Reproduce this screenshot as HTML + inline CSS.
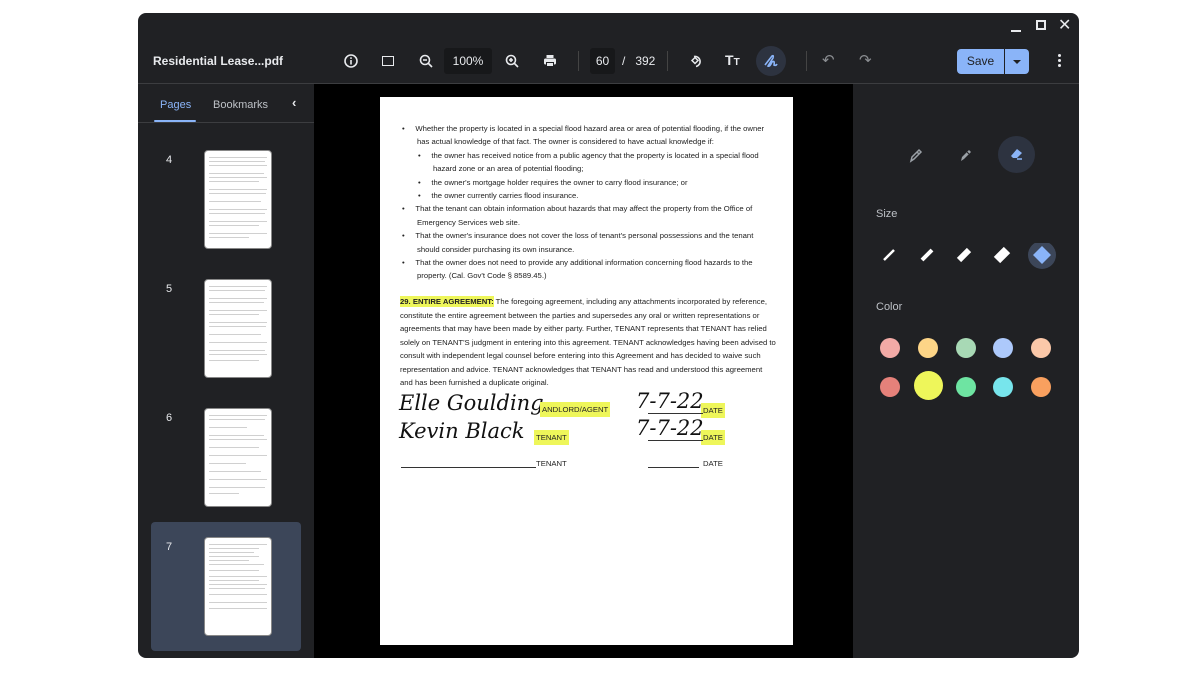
<!DOCTYPE html>
<html><head><meta charset="utf-8"><style>
*{margin:0;padding:0;box-sizing:border-box}
body{width:1200px;height:675px;background:#fff;font-family:"Liberation Sans",Arial,sans-serif;position:relative;overflow:hidden}
.win{position:absolute;left:138px;top:13px;width:941px;height:645px;background:#202124;border-radius:8px;overflow:hidden}
.a{position:absolute}
.doc{position:absolute;left:242px;top:84px;width:413px;height:548px;background:#fff;color:#222;font-size:7.7px}
.doc .l{position:absolute;white-space:nowrap}
.hl{background:#eef65a}
.thumb{position:absolute;left:66px;width:68px;height:99px;background:#fff;border-radius:4px;border:1px solid #888}
.thumb i{position:absolute;left:4px;height:1px;background:#d0d0d0}
.num{position:absolute;left:28px;color:#e8eaed;font-size:11px}
.dot{position:absolute;width:20px;height:20px;border-radius:50%}
.sig{font-family:"DejaVu Serif",serif;font-style:italic;font-size:21px;color:#111}
</style></head><body>
<div class="win">
 <div class="a" style="left:873px;top:17px;width:10px;height:2px;background:#e8eaed"></div>
 <div class="a" style="left:898px;top:7px;width:10px;height:10px;border:2px solid #e8eaed"></div>
 <div class="a" style="left:920px;top:2px;color:#e8eaed;font-size:16px">✕</div>
 <div class="a" style="left:15px;top:41px;color:#e8eaed;font-size:12px;font-weight:bold">Residential Lease...pdf</div>
 <svg class="a" style="left:205px;top:40px" width="16" height="16" viewBox="0 0 16 16"><circle cx="8" cy="8" r="6" fill="none" stroke="#e8eaed" stroke-width="1.6"/><rect x="7.2" y="7" width="1.6" height="4.5" fill="#e8eaed"/><rect x="7.2" y="4.3" width="1.6" height="1.6" fill="#e8eaed"/></svg>
 <div class="a" style="left:244px;top:43px;width:12px;height:10px;border:1.6px solid #e8eaed"></div>
 <svg class="a" style="left:280px;top:40px" width="16" height="16" viewBox="0 0 16 16"><circle cx="7" cy="7" r="4.5" fill="none" stroke="#e8eaed" stroke-width="1.6"/><path d="M10.5 10.5L14 14M5 7h4" stroke="#e8eaed" stroke-width="1.6"/></svg>
 <div class="a" style="left:306px;top:35px;width:48px;height:26px;background:#17181a;border-radius:3px;color:#e8eaed;font-size:12px;text-align:center;line-height:26px">100%</div>
 <svg class="a" style="left:366px;top:40px" width="16" height="16" viewBox="0 0 16 16"><circle cx="7" cy="7" r="4.5" fill="none" stroke="#e8eaed" stroke-width="1.6"/><path d="M10.5 10.5L14 14M5 7h4M7 5v4" stroke="#e8eaed" stroke-width="1.6"/></svg>
 <svg class="a" style="left:404px;top:40px" width="16" height="16" viewBox="0 0 16 16"><rect x="4.5" y="2" width="7" height="3" fill="#e8eaed"/><rect x="2" y="5.5" width="12" height="6" rx="1.5" fill="#e8eaed"/><rect x="4.5" y="9.5" width="7" height="4" fill="#e8eaed" stroke="#202124" stroke-width="1"/></svg>
 <div class="a" style="left:440px;top:38px;width:1px;height:20px;background:#444"></div>
 <div class="a" style="left:452px;top:35px;width:25px;height:26px;background:#17181a;border-radius:3px;color:#e8eaed;font-size:12px;text-align:center;line-height:26px">60</div>
 <div class="a" style="left:484px;top:41px;color:#e8eaed;font-size:12px">/&nbsp;&nbsp;&nbsp;392</div>
 <div class="a" style="left:529px;top:38px;width:1px;height:20px;background:#444"></div>
 <svg class="a" style="left:550px;top:40px" width="16" height="16" viewBox="0 0 16 16"><path d="M6 3.5A5 5 0 1 1 8 13.5" fill="none" stroke="#e8eaed" stroke-width="1.6"/><path d="M4 7.5l3 -3 3 3-3 3z" fill="none" stroke="#e8eaed" stroke-width="1.5"/></svg>
 <div class="a" style="left:587px;top:39px;color:#e8eaed;font-size:14px;font-weight:bold">T<span style="font-size:10px">T</span></div>
 <div class="a" style="left:618px;top:33px;width:30px;height:30px;border-radius:50%;background:#2d3340"></div>
 <svg class="a" style="left:625px;top:40px" width="16" height="16" viewBox="0 0 16 16"><path d="M2 12L9 3Q11 2 10 5L5 13Q7 14 9 9Q12 7 11 12Q13 13 14 11" fill="none" stroke="#8ab4f8" stroke-width="1.6"/></svg>
 <div class="a" style="left:668px;top:38px;width:1px;height:20px;background:#444"></div>
 <div class="a" style="left:684px;top:38px;color:#8a8d91;font-size:15px">↶</div>
 <div class="a" style="left:721px;top:38px;color:#8a8d91;font-size:15px">↷</div>
 <div class="a" style="left:819px;top:36px;width:47px;height:25px;background:#8ab4f8;border-radius:4px 0 0 4px;color:#202124;font-size:12px;text-align:center;line-height:25px">Save</div>
 <div class="a" style="left:867px;top:36px;width:24px;height:25px;background:#8ab4f8;border-radius:0 4px 4px 0"></div>
 <div class="a" style="left:875px;top:47px;border:4px solid transparent;border-top:4px solid #202124;border-bottom:0"></div>
 <div class="a" style="left:920px;top:41px;width:3px;height:3px;background:#e8eaed;border-radius:50%;box-shadow:0 5px 0 #e8eaed,0 10px 0 #e8eaed"></div>
 <div class="a" style="left:0;top:70px;width:941px;height:1px;background:#3c3d40"></div>
 <div class="a" style="left:22px;top:86px;color:#8ab4f8;font-size:11px">Pages</div>
 <div class="a" style="left:16px;top:107px;width:42px;height:2px;background:#8ab4f8;border-radius:2px"></div>
 <div class="a" style="left:75px;top:86px;color:#bdc1c6;font-size:11px">Bookmarks</div>
 <div class="a" style="left:154px;top:82px;color:#e8eaed;font-size:13px;font-weight:bold">‹</div>
 <div class="a" style="left:0;top:109px;width:176px;height:1px;background:#3c3d40"></div>
 <div class="a" style="left:13px;top:509px;width:150px;height:129px;background:#3c4659;border-radius:4px"></div>
 <div class="num" style="top:141px">4</div><div class="num" style="top:270px">5</div><div class="num" style="top:399px">6</div><div class="num" style="top:528px">7</div>
 <div class="thumb" style="top:137px"><i style="top:6px;width:58px"></i><i style="top:10px;width:56px"></i><i style="top:14px;width:58px"></i><i style="top:22px;width:55px"></i><i style="top:26px;width:58px"></i><i style="top:30px;width:50px"></i><i style="top:38px;width:58px"></i><i style="top:42px;width:57px"></i><i style="top:50px;width:52px"></i><i style="top:58px;width:58px"></i><i style="top:62px;width:56px"></i><i style="top:70px;width:58px"></i><i style="top:74px;width:50px"></i><i style="top:82px;width:58px"></i><i style="top:86px;width:40px"></i></div>
 <div class="thumb" style="top:266px"><i style="top:6px;width:58px"></i><i style="top:10px;width:56px"></i><i style="top:18px;width:58px"></i><i style="top:22px;width:55px"></i><i style="top:30px;width:58px"></i><i style="top:34px;width:50px"></i><i style="top:42px;width:58px"></i><i style="top:46px;width:57px"></i><i style="top:54px;width:52px"></i><i style="top:62px;width:58px"></i><i style="top:70px;width:56px"></i><i style="top:74px;width:58px"></i><i style="top:80px;width:50px"></i></div>
 <div class="thumb" style="top:395px"><i style="top:6px;width:58px"></i><i style="top:10px;width:56px"></i><i style="top:18px;width:38px"></i><i style="top:26px;width:55px"></i><i style="top:30px;width:58px"></i><i style="top:38px;width:50px"></i><i style="top:46px;width:58px"></i><i style="top:54px;width:37px"></i><i style="top:62px;width:52px"></i><i style="top:70px;width:58px"></i><i style="top:78px;width:56px"></i><i style="top:84px;width:30px"></i></div>
 <div class="thumb" style="top:524px"><i style="top:6px;width:58px"></i><i style="top:10px;width:50px"></i><i style="top:14px;width:45px"></i><i style="top:18px;width:50px"></i><i style="top:22px;width:40px"></i><i style="top:26px;width:55px"></i><i style="top:32px;width:50px"></i><i style="top:38px;width:58px"></i><i style="top:42px;width:50px"></i><i style="top:46px;width:58px"></i><i style="top:50px;width:56px"></i><i style="top:56px;width:58px"></i><i style="top:64px;width:58px"></i><i style="top:70px;width:58px"></i></div>
 <div class="a" style="left:176px;top:71px;width:539px;height:574px;background:#000"></div>
 <div class="doc">
  <div class="l" style="left:22px;top:27px">•&nbsp;&nbsp;&nbsp;&nbsp;&nbsp;Whether the property is located in a special flood hazard area or area of potential flooding, if the owner</div>
  <div class="l" style="left:37px;top:40px">has actual knowledge of that fact. The owner is considered to have actual knowledge if:</div>
  <div class="l" style="left:38px;top:54px">•&nbsp;&nbsp;&nbsp;&nbsp;&nbsp;the owner has received notice from a public agency that the property is located in a special flood</div>
  <div class="l" style="left:53px;top:67px">hazard zone or an area of potential flooding;</div>
  <div class="l" style="left:38px;top:81px">•&nbsp;&nbsp;&nbsp;&nbsp;&nbsp;the owner's mortgage holder requires the owner to carry flood insurance; or</div>
  <div class="l" style="left:38px;top:94px">•&nbsp;&nbsp;&nbsp;&nbsp;&nbsp;the owner currently carries flood insurance.</div>
  <div class="l" style="left:22px;top:107px">•&nbsp;&nbsp;&nbsp;&nbsp;&nbsp;That the tenant can obtain information about hazards that may affect the property from the Office of</div>
  <div class="l" style="left:37px;top:121px">Emergency Services web site.</div>
  <div class="l" style="left:22px;top:134px">•&nbsp;&nbsp;&nbsp;&nbsp;&nbsp;That the owner's insurance does not cover the loss of tenant's personal possessions and the tenant</div>
  <div class="l" style="left:37px;top:148px">should consider purchasing its own insurance.</div>
  <div class="l" style="left:22px;top:161px">•&nbsp;&nbsp;&nbsp;&nbsp;&nbsp;That the owner does not need to provide any additional information concerning flood hazards to the</div>
  <div class="l" style="left:37px;top:174px">property. (Cal. Gov't Code § 8589.45.)</div>
  <div class="l" style="left:20px;top:200px"><b class="hl" style="padding:1px 0">29. ENTIRE AGREEMENT:</b> The foregoing agreement, including any attachments incorporated by reference,</div>
  <div class="l" style="left:20px;top:214px">constitute the entire agreement between the parties and supersedes any oral or written representations or</div>
  <div class="l" style="left:20px;top:227px">agreements that may have been made by either party. Further, TENANT represents that TENANT has relied</div>
  <div class="l" style="left:20px;top:241px">solely on TENANT'S judgment in entering into this agreement. TENANT acknowledges having been advised to</div>
  <div class="l" style="left:20px;top:254px">consult with independent legal counsel before entering into this Agreement and has decided to waive such</div>
  <div class="l" style="left:20px;top:268px">representation and advice. TENANT acknowledges that TENANT has read and understood this agreement</div>
  <div class="l" style="left:20px;top:281px">and has been furnished a duplicate original.</div>
  <div class="l sig" style="left:19px;top:294px">Elle Goulding</div>
  <div class="l hl" style="left:160px;top:305px;padding:3px 2px">ANDLORD/AGENT</div>
  <div class="l sig" style="left:256px;top:292px">7-7-22</div>
  <div class="l hl" style="left:321px;top:306px;padding:3px 2px">DATE</div>
  <div class="l sig" style="left:19px;top:322px">Kevin Black</div>
  <div class="l hl" style="left:154px;top:333px;padding:3px 2px">TENANT</div>
  <div class="l sig" style="left:256px;top:319px">7-7-22</div>
  <div class="l hl" style="left:321px;top:333px;padding:3px 2px">DATE</div>
  <div class="l" style="left:156px;top:362px">TENANT</div>
  <div class="a" style="left:21px;top:370px;width:135px;height:1px;background:#333"></div>
  <div class="a" style="left:268px;top:370px;width:51px;height:1px;background:#333"></div>
  <div class="l" style="left:323px;top:362px">DATE</div>
  <div class="a" style="left:268px;top:316px;width:55px;height:1px;background:#333"></div>
  <div class="a" style="left:268px;top:343px;width:55px;height:1px;background:#333"></div>
 </div>
 <svg class="a" style="left:770px;top:134px" width="16" height="16" viewBox="0 0 16 16"><path d="M3 14L4 10L11 3L13 5L6 12Z M9 5L11 7" fill="none" stroke="#9aa0a6" stroke-width="1.5"/></svg>
 <svg class="a" style="left:820px;top:134px" width="16" height="16" viewBox="0 0 16 16"><path d="M3 14L4 10L11 3L13 5L6 12Z" fill="#9aa0a6"/><path d="M9 5L11 7" stroke="#202124" stroke-width="1"/></svg>
 <div class="a" style="left:860px;top:123px;width:37px;height:37px;border-radius:50%;background:#2d3340"></div>
 <svg class="a" style="left:870px;top:133px" width="16" height="16" viewBox="0 0 16 16"><path d="M3 10L9 3L14 7L9 12H5Z" fill="#8ab4f8"/><path d="M9 13H14" stroke="#8ab4f8" stroke-width="1.5"/></svg>
 <div class="a" style="left:738px;top:195px;color:#bdc1c6;font-size:11px">Size</div>
 <svg class="a" style="left:740px;top:230px" width="180" height="30" viewBox="0 0 180 30">
  <path d="M6 17L16 7" stroke="#fff" stroke-width="2.5"/>
  <path d="M44 17L54 7" stroke="#fff" stroke-width="4"/>
  <path d="M81 17L91 7" stroke="#fff" stroke-width="6"/>
  <path d="M119 17L129 7" stroke="#fff" stroke-width="9"/>
  <circle cx="164" cy="12" r="14" fill="#3c4659"/>
  <path d="M164 3L173 12L164 21L155 12Z" fill="#8ab4f8"/>
 </svg>
 <div class="a" style="left:738px;top:288px;color:#bdc1c6;font-size:11px">Color</div>
 <div class="dot" style="left:742px;top:325px;background:#f2aaa6"></div>
 <div class="dot" style="left:780px;top:325px;background:#fdd587"></div>
 <div class="dot" style="left:818px;top:325px;background:#a8d9b5"></div>
 <div class="dot" style="left:855px;top:325px;background:#adc9fb"></div>
 <div class="dot" style="left:893px;top:325px;background:#fbc8a9"></div>
 <div class="dot" style="left:742px;top:364px;background:#e5817a"></div>
 <div class="dot" style="left:776px;top:358px;width:29px;height:29px;background:#eef65a"></div>
 <div class="dot" style="left:818px;top:364px;background:#6ee4a2"></div>
 <div class="dot" style="left:855px;top:364px;background:#77e5ec"></div>
 <div class="dot" style="left:893px;top:364px;background:#f9a05f"></div>
</div>
</body></html>
